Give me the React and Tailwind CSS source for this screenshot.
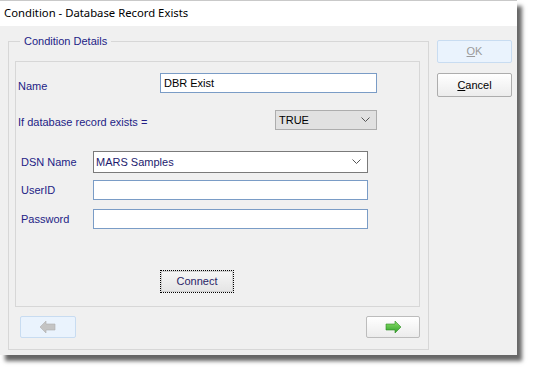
import React from 'react';

const label = 'text-[#231d86]';

const ArrowLeft = ({ color = '#c4c4c4' }) => (
  <svg width="16" height="12" viewBox="0 0 16 12">
    <polygon points="0,6 6,0 6,3 15,3 15,9 6,9 6,12" fill={color} stroke="#b0b0b0" strokeWidth="0.6" />
  </svg>
);

const ArrowRight = () => (
  <svg width="16" height="12" viewBox="0 0 16 12">
    <defs>
      <linearGradient id="g" x1="0" y1="0" x2="0" y2="1">
        <stop offset="0" stopColor="#8ee06a" />
        <stop offset="1" stopColor="#2fa12a" />
      </linearGradient>
    </defs>
    <polygon points="16,6 10,0 10,3 1,3 1,9 10,9 10,12" fill="url(#g)" stroke="#2b8a22" strokeWidth="0.6" />
  </svg>
);

const Chevron = () => (
  <svg width="9" height="6" viewBox="0 0 9 6" className="mr-[6px]">
    <polyline points="0.5,0.5 4.5,4.5 8.5,0.5" fill="none" stroke="#555" strokeWidth="1" />
  </svg>
);

export default function App() {
  return (
    <div className="w-[533px] h-[370px] bg-white font-['Liberation_Sans',Arial,sans-serif] text-[11px]">
      <div className="w-[517px] h-[355px] bg-[#f0f0f0] border-t border-[#c9c9c9] shadow-[5px_6px_4px_rgba(0,0,0,0.6)] flex flex-col">
        {/* title bar */}
        <div className="h-[25px] bg-white flex items-center pl-[4px] font-['Noto_Sans',sans-serif] text-[11.3px] text-black">
          Condition - Database Record Exists
        </div>

        <div className="flex">
          {/* group box */}
          <fieldset className="ml-[8px] mt-[8px] w-[421px] h-[316px] border border-[#d7d7d7] pl-[6px] pr-[8px]">
            <legend className={`ml-[5px] px-[4px] ${label} text-[11px] leading-[14px]`}>Condition Details</legend>
            <div className="mt-[13px] h-[246px] border border-[#d7d7d7] flex flex-col">
              {/* Name */}
              <div className="flex items-center mt-[11px] h-[20px] pl-[2px]">
                <span className={`w-[142px] pt-[7px] ${label}`}>Name</span>
                <div className="w-[217px] h-[20px] bg-white border border-[#7a9cc6] flex items-center pl-[3px] text-black">DBR Exist</div>
              </div>
              {/* If record exists */}
              <div className="flex items-center mt-[17px] h-[20px] pl-[2px]">
                <span className={`w-[257px] pt-[4px] ${label}`}>If database record exists =</span>
                <div className="w-[102px] h-[20px] bg-[#e1e1e1] border border-[#adadad] flex items-center justify-between pl-[3px] text-black">
                  TRUE
                  <Chevron />
                </div>
              </div>
              {/* DSN */}
              <div className="flex items-center mt-[21px] h-[22px] pl-[5px]">
                <span className={`w-[72px] ${label}`}>DSN Name</span>
                <div className="w-[275px] h-[22px] bg-white border border-[#7a7a7a] flex items-center justify-between pl-[2px] text-[#1c1a6e]">
                  MARS Samples
                  <Chevron />
                </div>
              </div>
              <div className="flex items-center mt-[7px] h-[20px] pl-[5px]">
                <span className={`w-[72px] ${label}`}>UserID</span>
                <div className="w-[275px] h-[20px] bg-white border border-[#7a9cc6]" />
              </div>
              <div className="flex items-center mt-[9px] h-[20px] pl-[5px]">
                <span className={`w-[72px] ${label}`}>Password</span>
                <div className="w-[275px] h-[20px] bg-white border border-[#7a9cc6]" />
              </div>
              {/* Connect */}
              <div className="mt-[41px] ml-[144px]">
                <button className="w-[74px] h-[23px] border border-dotted border-black bg-gradient-to-b from-[#f6f6f6] to-[#e4e4e4] text-[#2a2466] text-[11px] shadow-[inset_0_0_0_1px_#d0d0d0]">
                  Connect
                </button>
              </div>
            </div>
            {/* nav buttons */}
            <div className="flex justify-between mt-[9px]">
              <button className="ml-[5px] w-[56px] h-[22px] rounded-[2px] bg-[#eaf3fd] border border-[#c8dcf1] flex items-center justify-center">
                <ArrowLeft />
              </button>
              <button className="w-[54px] h-[22px] rounded-[2px] bg-gradient-to-b from-white to-[#ececec] border border-[#bcbcbc] flex items-center justify-center">
                <ArrowRight />
              </button>
            </div>
          </fieldset>

          {/* right buttons */}
          <div className="ml-[8px] mt-[14px] flex flex-col gap-[10px]">
            <button className="w-[75px] h-[23px] rounded-[2px] bg-[#eaf3fd] border border-[#c8dcf1] text-[#9a9a9a] text-[11px]">
              <span className="underline">O</span>K
            </button>
            <button className="w-[75px] h-[24px] rounded-[2px] bg-gradient-to-b from-white to-[#ececec] border border-[#adadad] text-black text-[11px]">
              <span className="underline">C</span>ancel
            </button>
          </div>
        </div>
      </div>
    </div>
  );
}
